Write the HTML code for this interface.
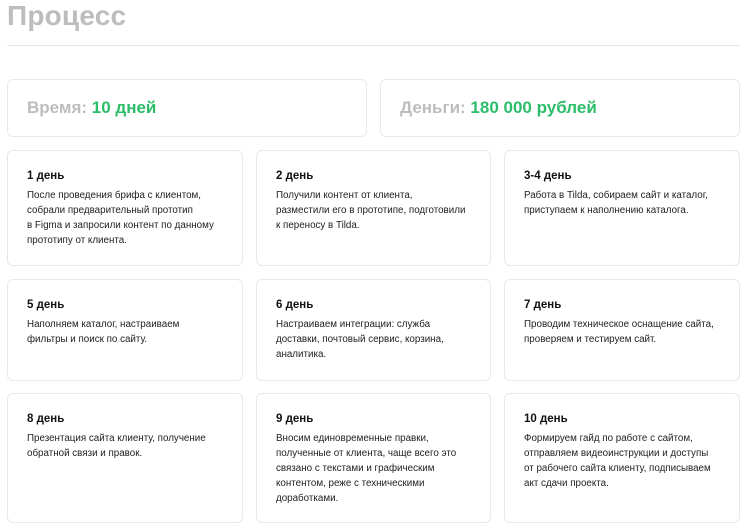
<!DOCTYPE html>
<html><head><meta charset="utf-8"><style>
*{margin:0;padding:0;box-sizing:border-box}
body{width:751px;height:528px;background:#fff;font-family:"Liberation Sans",sans-serif;position:relative;overflow:hidden;color:#111}
h1{position:absolute;left:7px;top:0px;font-size:28px;font-weight:bold;color:#bdbdbd;letter-spacing:0.2px}
.line{position:absolute;left:7px;top:45px;width:733px;height:1px;background:#e6e6e6}
.box{position:absolute;border:1px solid #e8e8e8;border-radius:6px;background:#fff}
.top{top:79px;height:58px;font-size:17px;font-weight:bold;color:#bdbdbd;padding:18px 0 0 19px}
.top span{color:#2bbd6a}
.card{padding:19px 0 0 19px}
.card b{display:block;font-size:11.5px;margin-bottom:6px;color:#111}
.card p{font-size:9.8px;line-height:15px;color:#222}
</style></head><body>
<h1>Процесс</h1>
<div class="line"></div>
<div class="box top" style="left:7px;width:360px">Время: <span>10 дней</span></div>
<div class="box top" style="left:380px;width:360px">Деньги: <span>180 000 рублей</span></div>

<div class="box card" style="left:7px;top:150px;width:236px;height:116px"><b>1 день</b><p>После проведения брифа с клиентом,<br>собрали предварительный прототип<br>в Figma и запросили контент по данному<br>прототипу от клиента.</p></div>
<div class="box card" style="left:256px;top:150px;width:235px;height:116px"><b>2 день</b><p>Получили контент от клиента,<br>разместили его в прототипе, подготовили<br>к переносу в Tilda.</p></div>
<div class="box card" style="left:504px;top:150px;width:236px;height:116px"><b>3-4 день</b><p>Работа в Tilda, собираем сайт и каталог,<br>приступаем к наполнению каталога.</p></div>

<div class="box card" style="left:7px;top:279px;width:236px;height:102px"><b>5 день</b><p>Наполняем каталог, настраиваем<br>фильтры и поиск по сайту.</p></div>
<div class="box card" style="left:256px;top:279px;width:235px;height:102px"><b>6 день</b><p>Настраиваем интеграции: служба<br>доставки, почтовый сервис, корзина,<br>аналитика.</p></div>
<div class="box card" style="left:504px;top:279px;width:236px;height:102px"><b>7 день</b><p>Проводим техническое оснащение сайта,<br>проверяем и тестируем сайт.</p></div>

<div class="box card" style="left:7px;top:393px;width:236px;height:130px"><b>8 день</b><p>Презентация сайта клиенту, получение<br>обратной связи и правок.</p></div>
<div class="box card" style="left:256px;top:393px;width:235px;height:130px"><b>9 день</b><p>Вносим единовременные правки,<br>полученные от клиента, чаще всего это<br>связано с текстами и графическим<br>контентом, реже с техническими<br>доработками.</p></div>
<div class="box card" style="left:504px;top:393px;width:236px;height:130px"><b>10 день</b><p>Формируем гайд по работе с сайтом,<br>отправляем видеоинструкции и доступы<br>от рабочего сайта клиенту, подписываем<br>акт сдачи проекта.</p></div>
</body></html>
